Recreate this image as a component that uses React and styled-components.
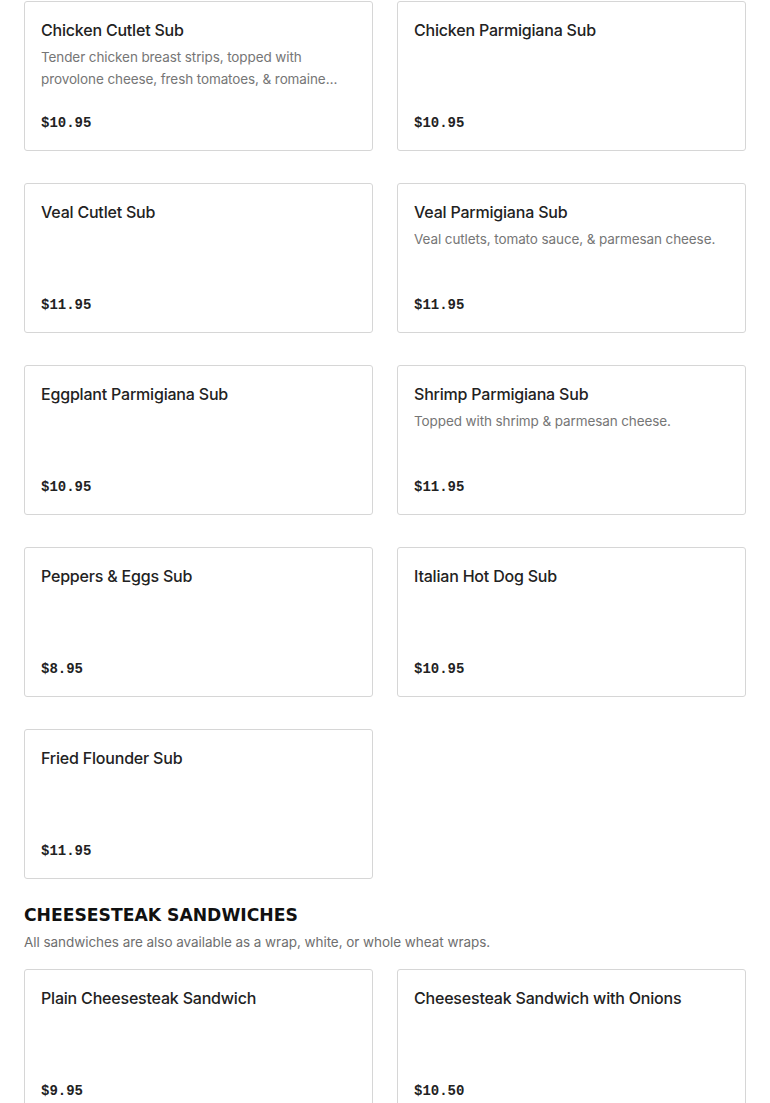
import React from "react";
import styled, { createGlobalStyle } from "styled-components";

const GlobalStyle = createGlobalStyle`
  html, body {
    margin: 0;
    padding: 0;
    background: #ffffff;
  }
  body {
    font-family: Inter, "Noto Sans", sans-serif;
    color: #222222;
  }
`;

const subs = [
  {
    name: "Chicken Cutlet Sub",
    desc: "Tender chicken breast strips, topped with provolone cheese, fresh tomatoes, & romaine lettuce on a toasted roll.",
    price: "$10.95",
  },
  { name: "Chicken Parmigiana Sub", price: "$10.95" },
  { name: "Veal Cutlet Sub", price: "$11.95" },
  {
    name: "Veal Parmigiana Sub",
    desc: "Veal cutlets, tomato sauce, & parmesan cheese.",
    price: "$11.95",
  },
  { name: "Eggplant Parmigiana Sub", price: "$10.95" },
  {
    name: "Shrimp Parmigiana Sub",
    desc: "Topped with shrimp & parmesan cheese.",
    price: "$11.95",
  },
  { name: "Peppers & Eggs Sub", price: "$8.95" },
  { name: "Italian Hot Dog Sub", price: "$10.95" },
  { name: "Fried Flounder Sub", price: "$11.95" },
];

const cheesesteaks = [
  { name: "Plain Cheesesteak Sandwich", price: "$9.95" },
  { name: "Cheesesteak Sandwich with Onions", price: "$10.50" },
];

const Page = styled.main`
  padding: 1px 24px 0;
`;

const Section = styled.section`
  & + & {
    margin-top: 24px;
  }
`;

const SectionTitle = styled.h2`
  margin: 0;
  font-family: "DejaVu Sans", sans-serif;
  font-weight: 900;
  font-size: 17.2px;
  line-height: 24px;
  color: #111111;
  text-transform: uppercase;
`;

const SectionNote = styled.p`
  margin: 4px 0 16px;
  font-size: 13.5px;
  line-height: 22px;
  letter-spacing: -0.05px;
  color: #6f6f6f;
`;

const Grid = styled.div`
  display: grid;
  grid-template-columns: repeat(2, 1fr);
  column-gap: 24px;
  row-gap: 32px;
`;

const Card = styled.article`
  box-sizing: border-box;
  height: 150px;
  display: flex;
  flex-direction: column;
  padding: 16px 16px 17px;
  border: 1px solid #d6d6d6;
  border-radius: 3px;
  background: #ffffff;
`;

const Name = styled.h3`
  margin: 0 0 4px;
  font-size: 16px;
  line-height: 24px;
  letter-spacing: -0.2px;
  font-weight: 500;
  color: #222222;
`;

const Desc = styled.p`
  margin: 0;
  font-size: 13.5px;
  line-height: 22px;
  letter-spacing: -0.1px;
  color: #767676;
  display: -webkit-box;
  -webkit-line-clamp: 2;
  -webkit-box-orient: vertical;
  overflow: hidden;
`;

const Price = styled.span`
  margin-top: auto;
  font-family: "Liberation Mono", monospace;
  font-weight: 700;
  font-size: 14px;
  line-height: 20px;
  color: #222222;
`;

function MenuItem({ item }) {
  return (
    <Card>
      <Name>{item.name}</Name>
      {item.desc && <Desc>{item.desc}</Desc>}
      <Price>{item.price}</Price>
    </Card>
  );
}

export default function App() {
  return (
    <>
      <GlobalStyle />
      <Page>
        <Section>
          <Grid>
            {subs.map((item) => (
              <MenuItem key={item.name} item={item} />
            ))}
          </Grid>
        </Section>
        <Section>
          <SectionTitle>Cheesesteak Sandwiches</SectionTitle>
          <SectionNote>
            All sandwiches are also available as a wrap, white, or whole wheat wraps.
          </SectionNote>
          <Grid>
            {cheesesteaks.map((item) => (
              <MenuItem key={item.name} item={item} />
            ))}
          </Grid>
        </Section>
      </Page>
    </>
  );
}
